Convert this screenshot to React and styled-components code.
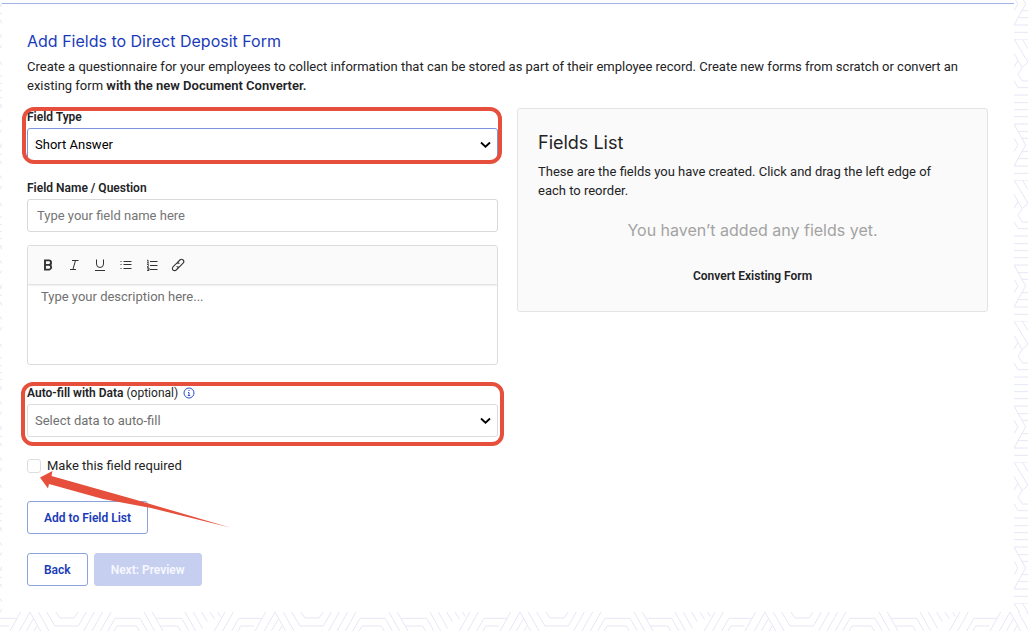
import React, { useState } from "react";
import styled, { createGlobalStyle, css } from "styled-components";

const GlobalStyle = createGlobalStyle`
  *, *::before, *::after { box-sizing: border-box; }
  body {
    margin: 0;
    background: #fff;
    color: #232325;
    font-family: Roboto, "Liberation Sans", sans-serif;
    font-size: 13px;
    line-height: 20px;
  }
  button, input, select, textarea { font: inherit; color: inherit; }
  strong { font-weight: 600; }
`;

const headingFont = css`
  font-family: Inter, "Liberation Sans", sans-serif;
  font-weight: 400;
`;

const Page = styled.div`
  display: grid;
  grid-template-columns: 2px minmax(0, 1fr) 14px;
  grid-template-rows: 1fr auto;
  min-height: 100vh;
`;

const SideStrip = styled.div`
  position: relative;
  overflow: hidden;
`;

const BottomStrip = styled.div`
  position: relative;
  grid-column: 1 / -1;
  height: 19px;
  overflow: hidden;
`;

const PatternSvg = styled.svg`
  position: absolute;
  inset: 0;
  width: 100%;
  height: 100%;
`;

const Sheet = styled.main`
  border-top: 1px solid #9fb2e8;
  margin-top: 3px;
  padding: 26px 26px 26px 25px;
`;

const Title = styled.h1`
  ${headingFont}
  margin: 0;
  color: #1a3bb8;
  font-size: 16px;
  line-height: 22px;
`;

const Intro = styled.p`
  margin: 5px 0 13px;
  line-height: 19px;
`;

const Columns = styled.div`
  display: grid;
  grid-template-columns: 1fr 1fr;
  gap: 19px;
  align-items: start;
`;

const Form = styled.form`
  display: flex;
  flex-direction: column;
`;

const Field = styled.div`
  position: relative;
  display: flex;
  flex-direction: column;
  gap: 2px;
  margin-bottom: ${(p) => p.$gap || 13}px;
`;

const Highlight = styled.div`
  position: absolute;
  inset: ${(p) => p.$inset};
  border: 4px solid #e54f3b;
  border-radius: 12px;
  pointer-events: none;
`;

const Label = styled.label`
  font-size: 12px;
  font-weight: 600;
  line-height: 18px;
`;

const LabelRow = styled.div`
  display: flex;
  align-items: center;
  gap: 5px;
  font-size: 12px;
  line-height: 18px;
`;

const InfoButton = styled.button`
  display: flex;
  margin: 0;
  padding: 0;
  border: 0;
  background: none;
  color: #2f4fc4;
`;

const control = css`
  width: 100%;
  height: 33px;
  border: 1px solid #d9d9d9;
  border-radius: 3px;
  background: #fff;
  outline: none;
`;

const TextInput = styled.input`
  ${control}
  padding: 0 9px;
  &::placeholder { color: #757575; opacity: 1; }
`;

const SelectWrap = styled.div`
  position: relative;
`;

const Select = styled.select`
  ${control}
  display: block;
  appearance: none;
  padding: 0 28px 0 7px;
  color: ${(p) => (p.$active ? "#000" : "#707070")};
  border-color: ${(p) => (p.$active ? "#7f93dc" : "#dcdcdc")};
`;

const Chevron = styled.svg`
  position: absolute;
  right: 7px;
  top: 13px;
  pointer-events: none;
`;

const Editor = styled.div`
  display: flex;
  flex-direction: column;
  margin-bottom: 19px;
  border: 1px solid #dcdcdc;
  border-radius: 3px;
  overflow: hidden;
`;

const Toolbar = styled.div`
  display: flex;
  align-items: center;
  gap: 10px;
  height: 38px;
  padding: 0 12px;
  background: #fafafa;
  box-shadow: 0 1px 2px rgba(0, 0, 0, 0.16);
`;

const ToolButton = styled.button`
  display: flex;
  width: 16px;
  height: 16px;
  padding: 0;
  border: 0;
  background: none;
  color: #333;
`;

const Description = styled.textarea`
  height: 80px;
  margin: 0;
  padding: 3px 13px;
  border: 0;
  outline: none;
  resize: none;
  background: transparent;
  line-height: 19px;
  &::placeholder { color: #707070; opacity: 1; }
`;

const CheckRow = styled.div`
  position: relative;
  display: flex;
  align-items: center;
  gap: 6px;
  margin-bottom: 25px;
`;

const Checkbox = styled.input`
  appearance: none;
  width: 14px;
  height: 14px;
  margin: 0;
  border: 1px solid #dedede;
  border-radius: 3px;
  background: #fff;
`;

const Arrow = styled.svg`
  position: absolute;
  left: 12px;
  top: 13px;
  z-index: 1;
  pointer-events: none;
`;

const ButtonRow = styled.div`
  display: flex;
  gap: 6px;
  margin-bottom: 19px;
  &:last-child { margin-bottom: 0; }
`;

const Button = styled.button`
  height: 33px;
  padding: 0 16px;
  border: 1px solid ${(p) => (p.$filled ? "#c6cff0" : "#8ba3dc")};
  border-radius: 3px;
  background: ${(p) => (p.$filled ? "#c6cff0" : "#fff")};
  color: ${(p) => (p.$filled ? "#f6f8ff" : "#1a3bb8")};
  font-size: 12px;
  font-weight: 600;
`;

const Panel = styled.section`
  display: flex;
  flex-direction: column;
  padding: 21px 20px 25px;
  border: 1px solid #e4e4e4;
  border-radius: 3px;
  background: #fafafa;
`;

const PanelTitle = styled.h2`
  ${headingFont}
  margin: 0 0 7px;
  font-size: 18px;
  line-height: 25px;
`;

const PanelText = styled.p`
  margin: 0;
  padding-right: 20px;
  line-height: 19px;
`;

const EmptyText = styled.p`
  ${headingFont}
  margin: 18px 0 24px;
  color: #a3a3a3;
  font-size: 16px;
  line-height: 24px;
  text-align: center;
`;

const TextButton = styled.button`
  align-self: center;
  padding: 0;
  border: 0;
  background: none;
  font-size: 12px;
  font-weight: 600;
  line-height: 20px;
`;

const bottomPath = `
M62 0L30 57M-18 19H50M-13 42H28M-18 19L-40 57M90 0L58 57M90 0L122 57M101 19L79 57M112 40L102 57
M115 0L147 57M140 0L165 42H235L259 0M168 0L180 18H222L234 0
M283 0L251 57M308 0L276 57M333 0L301 57M323 57L345 19H420L442 57M342 57L351 42H409L418 57
M432 0L464 57M457 0L489 57M470 19H545L567 57M483 42H533L542 57
M555 0L587 57M580 0L608 50M605 0L622 29M630 0L644 22M653 0L661 14M675 0L643 57M700 0L668 57
M695 57L717 19H785M714 57L722 42H763`;

const sidePath = `
M0 0H42M0 0L42 70M25 0L42 29M0 43L12 64L0 85M12 64L24 85M42 70L25 85L12 106L25 126H42
M0 125L12 146H42M0 168H42M0 191H42M0 212H42M0 233H42M0 255H42M0 255L35 318L0 381
M12 278H42M24 298H42M24 338H42M12 359H42M0 381H42M0 298L12 318L0 338M0 403H42`;

function StripPattern({ id, width, height, y = 0, d }) {
  return (
    <PatternSvg aria-hidden="true">
      <defs>
        <pattern id={id} width={width} height={height} y={y} patternUnits="userSpaceOnUse" viewBox={`0 0 ${width * 3} ${height * 3}`}>
          <path d={d} fill="none" stroke="#e5e7f6" strokeWidth="3" />
        </pattern>
      </defs>
      <rect width="100%" height="100%" fill={`url(#${id})`} />
    </PatternSvg>
  );
}

function ToolIcon({ children }) {
  return (
    <svg width="16" height="16" viewBox="0 0 16 16" fill="none" stroke="currentColor" strokeWidth="1" aria-hidden="true">
      {children}
    </svg>
  );
}

const tools = [
  ["Bold", <path key="i" strokeWidth="1.9" d="M5 3.4H8.8a2.2 2.2 0 0 1 0 4.5H5zM5 7.9h4.3a2.4 2.4 0 0 1 0 4.7H5z" />],
  ["Italic", <path key="i" d="M6 3.5h6.5M4 12.5h6M9.5 3.5l-2.6 9" />],
  ["Underline", <path key="i" d="M4.5 2.5V7a3.5 3.5 0 0 0 7 0V2.5M3 13.5h10" />],
  ["Bulleted list", <g key="i"><path d="M5.5 4.5H13.5M5.5 7.5H13.5M5.5 11.5H13.5" /><path d="M2.5 4.5h1M2.5 7.5h1M2.5 11.5h1" /></g>],
  ["Numbered list", <g key="i"><path d="M6 4.5H13.5M6 8.5H13.5M6 12.5H13.5" /><path strokeWidth=".9" d="M3 3.5l1-.5v3M3 6h2M3 7.5h1.5v1L3 10h2M3 11h2v2.5H3M3.5 12.2H5" /></g>],
  ["Link", <g key="i"><path strokeWidth="1.1" d="M7 5.9l2.9-2.9a2.2 2.2 0 0 1 3.2 3.2L9.9 9.4a2.2 2.2 0 0 1-3.2 0M9.2 10L6.2 13a2.2 2.2 0 0 1-3.2-3.2l3.2-3.2a2.2 2.2 0 0 1 3.2 0" /></g>],
];

function SelectBox({ id, value, active }) {
  return (
    <SelectWrap>
      <Select id={id} $active={active} defaultValue={value}>
        <option>{value}</option>
      </Select>
      <Chevron width="11" height="8" viewBox="0 0 11 8" fill="none" stroke="#000" strokeWidth="1.8" aria-hidden="true">
        <path d="M1 1.5l4.5 4.2L10 1.5" />
      </Chevron>
    </SelectWrap>
  );
}

export default function App() {
  const [required, setRequired] = useState(false);
  return (
    <>
      <GlobalStyle />
      <Page>
        <SideStrip>
          <StripPattern id="left-lines" width={14} height={141} y={20} d={sidePath} />
        </SideStrip>
        <Sheet>
          <Title>Add Fields to Direct Deposit Form</Title>
          <Intro>
            Create a questionnaire for your employees to collect information that can be stored as part of their
            employee record. Create new forms from scratch or convert an existing form{" "}
            <strong>with the new Document Converter.</strong>
          </Intro>
          <Columns>
            <Form onSubmit={(e) => e.preventDefault()}>
              <Field $gap={18}>
                <Label htmlFor="field-type">Field Type</Label>
                <SelectBox id="field-type" value="Short Answer" active />
                <Highlight $inset="-1px -4px -3px -5px" />
              </Field>
              <Field>
                <Label htmlFor="field-name">Field Name / Question</Label>
                <TextInput id="field-name" placeholder="Type your field name here" />
              </Field>
              <Editor>
                <Toolbar role="toolbar" aria-label="Formatting">
                  {tools.map(([name, icon]) => (
                    <ToolButton key={name} type="button" aria-label={name}>
                      <ToolIcon>{icon}</ToolIcon>
                    </ToolButton>
                  ))}
                </Toolbar>
                <Description aria-label="Description" placeholder="Type your description here..." />
              </Editor>
              <Field $gap={19}>
                <LabelRow>
                  <label htmlFor="auto-fill">
                    <strong>Auto-fill with Data</strong> (optional)
                  </label>
                  <InfoButton type="button" aria-label="About auto-fill">
                    <svg width="12" height="12" viewBox="0 0 12 12" fill="none" stroke="currentColor" aria-hidden="true">
                      <circle cx="6" cy="6" r="5" />
                      <path d="M5 5.5h1v3M4.8 8.5h2.4M5.5 3.5h1" />
                    </svg>
                  </InfoButton>
                </LabelRow>
                <SelectBox id="auto-fill" value="Select data to auto-fill" />
                <Highlight $inset="-2px -6px -9px -6px" />
              </Field>
              <CheckRow>
                <Checkbox id="required" type="checkbox" checked={required} onChange={(e) => setRequired(e.target.checked)} />
                <label htmlFor="required">Make this field required</label>
                <Arrow width="192" height="60" viewBox="0 0 192 60" aria-hidden="true">
                  <path fill="#e54f3b" d="M1 8.5L13.5 2L12.5 7L94 30L191 58.5L112 39L64 30L10 15L9 19.5Z" />
                </Arrow>
              </CheckRow>
              <ButtonRow>
                <Button type="submit">Add to Field List</Button>
              </ButtonRow>
              <ButtonRow>
                <Button type="button">Back</Button>
                <Button type="button" $filled disabled>Next: Preview</Button>
              </ButtonRow>
            </Form>
            <Panel>
              <PanelTitle>Fields List</PanelTitle>
              <PanelText>
                These are the fields you have created. Click and drag the left edge of each to reorder.
              </PanelText>
              <EmptyText>You haven’t added any fields yet.</EmptyText>
              <TextButton type="button">Convert Existing Form</TextButton>
            </Panel>
          </Columns>
        </Sheet>
        <SideStrip>
          <StripPattern id="right-lines" width={14} height={141} y={39} d={sidePath} />
        </SideStrip>
        <BottomStrip>
          <StripPattern id="bottom-lines" width={245} height={19} d={bottomPath} />
        </BottomStrip>
      </Page>
    </>
  );
}
